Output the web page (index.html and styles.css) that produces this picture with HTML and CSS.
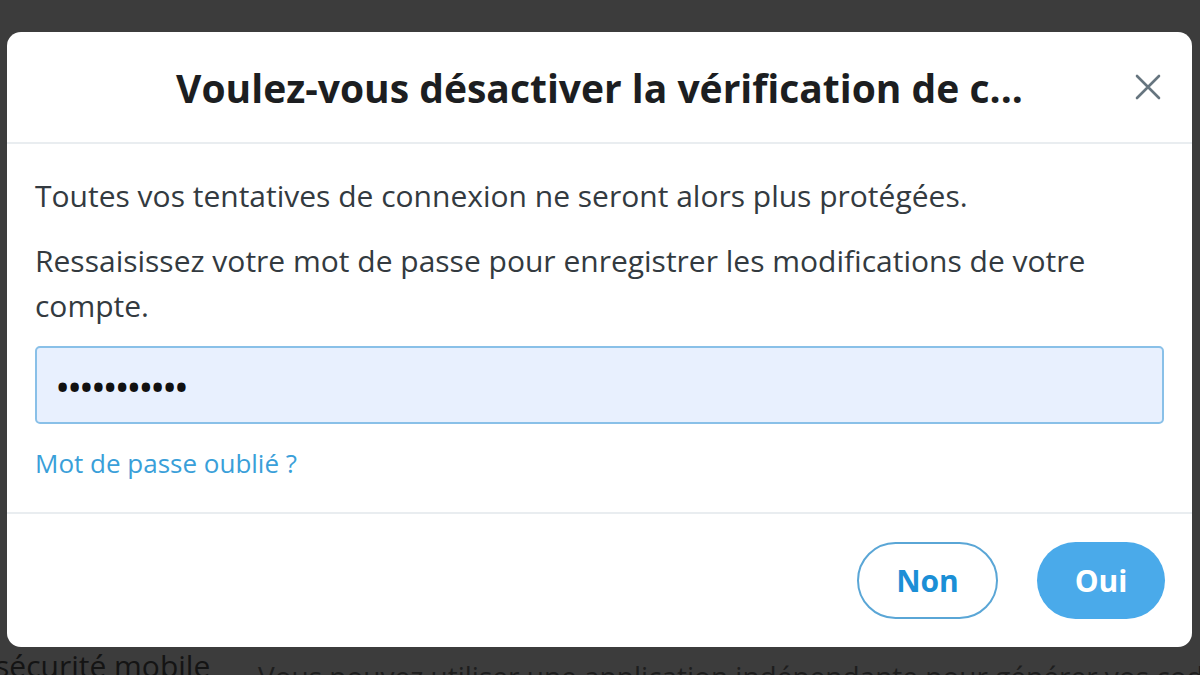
FILE: index.html
```html
<!DOCTYPE html>
<html lang="fr">
<head>
    <meta charset="UTF-8">
    <meta name="viewport" content="width=device-width, initial-scale=1.0">
    <title>Désactiver la vérification de connexion</title>
    <link rel="stylesheet" href="styles.css">
</head>
<body>
    <div class="modal">
        <div class="modal-header">
            <h1 class="modal-title">Voulez-vous désactiver la vérification de c...</h1>
            <button class="close-btn" aria-label="Fermer">
                <svg width="28" height="28" viewBox="0 0 28 28">
                    <path d="M3 3 L25 25 M25 3 L3 25" stroke="#66757f" stroke-width="2.6" stroke-linecap="round" fill="none"/>
                </svg>
            </button>
        </div>

        <div class="modal-body">
            <p class="text">Toutes vos tentatives de connexion ne seront alors plus protégées.</p>
            <p class="text">Ressaisissez votre mot de passe pour enregistrer les modifications de votre compte.</p>
            <div class="password-field">•••••••••••</div>
            <a class="forgot" href="#">Mot de passe oublié ?</a>
        </div>

        <div class="modal-footer">
            <button class="btn btn-outline">Non</button>
            <button class="btn btn-primary">Oui</button>
        </div>
    </div>

    <div class="behind">
        <div class="behind-label">sécurité mobile</div>
        <div class="behind-text">Vous pouvez utiliser une application indépendante pour générer vos codes</div>
    </div>
</body>
</html>
```

FILE: styles.css
```css
body {
    margin: 0;
    height: 675px;
    overflow: hidden;
    background-color: #3c3c3c;
    font-family: "Open Sans", "Noto Sans", sans-serif;
    color: #14171a;
}

.modal {
    margin: 32px 8px 0 7px;
    height: 615px;
    background-color: #fff;
    border-radius: 14px;
    display: flex;
    flex-direction: column;
}

.modal-header {
    height: 110px;
    border-bottom: 2px solid #e9edf0;
    display: flex;
    align-items: center;
    justify-content: center;
    position: relative;
}

.modal-title {
    margin: 0;
    font-size: 39px;
    font-weight: 700;
    color: #1c1e21;
}

.close-btn {
    position: absolute;
    right: 30px;
    top: 41px;
    width: 28px;
    height: 28px;
    padding: 0;
    border: none;
    background: none;
    cursor: pointer;
}

.modal-body {
    padding: 29px 28px 34px 28px;
    border-bottom: 2px solid #e9edf0;
}

.text {
    margin: 0 0 20px 0;
    font-size: 30px;
    line-height: 45px;
    color: #333a40;
}

.text + .text {
    margin-bottom: 18px;
}

.password-field {
    box-sizing: border-box;
    height: 78px;
    border: 2px solid #89c0e8;
    border-radius: 5px;
    background-color: #e8f0fe;
    padding: 3px 0 0 20px;
    display: flex;
    align-items: center;
    font-size: 30px;
    font-weight: 700;
    letter-spacing: 0.6px;
    color: #111;
}

.forgot {
    display: block;
    margin-top: 24px;
    font-size: 26px;
    line-height: 30px;
    color: #3a9fd9;
    text-decoration: none;
}

.modal-footer {
    flex: 1;
    display: flex;
    justify-content: flex-end;
    align-items: flex-start;
    gap: 39px;
    padding: 28px 27px 0 0;
}

.btn {
    height: 77px;
    border-radius: 40px;
    font-family: "Open Sans", "Noto Sans", sans-serif;
    font-size: 30px;
    font-weight: 700;
    cursor: pointer;
}

.btn-outline {
    width: 141px;
    background-color: #fff;
    border: 2px solid #5aa6d6;
    color: #1b8fd6;
}

.btn-primary {
    width: 128px;
    background-color: #4aaaea;
    border: none;
    color: #fff;
}

.behind {
    display: flex;
    align-items: flex-start;
    margin-top: 2px;
}

.behind-label {
    flex-shrink: 0;
    margin-left: -5px;
    width: 263px;
    font-size: 30px;
    line-height: 34px;
    color: #141414;
}

.behind-text {
    margin-top: 10px;
    font-size: 28px;
    line-height: 34px;
    color: #1e1e1e;
    white-space: nowrap;
}
```
